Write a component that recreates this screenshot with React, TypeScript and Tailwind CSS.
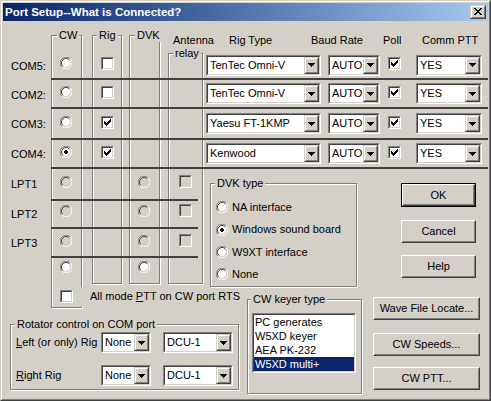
import React from "react";

const Arrow = () => (
  <svg width="7" height="4" viewBox="0 0 7 4" shapeRendering="crispEdges" className="block">
    <rect x="0" y="0" width="7" height="1" fill="#000" />
    <rect x="1" y="1" width="5" height="1" fill="#000" />
    <rect x="2" y="2" width="3" height="1" fill="#000" />
    <rect x="3" y="3" width="1" height="1" fill="#000" />
  </svg>
);

const Check = () => (
  <svg width="7" height="7" viewBox="0 0 7 7" shapeRendering="crispEdges" className="block">
    <rect x="6" y="0" width="1" height="1" fill="#000" />
    <rect x="5" y="1" width="2" height="1" fill="#000" />
    <rect x="0" y="2" width="1" height="1" fill="#000" />
    <rect x="4" y="2" width="3" height="1" fill="#000" />
    <rect x="0" y="3" width="2" height="1" fill="#000" />
    <rect x="3" y="3" width="3" height="1" fill="#000" />
    <rect x="0" y="4" width="5" height="1" fill="#000" />
    <rect x="1" y="5" width="3" height="1" fill="#000" />
    <rect x="2" y="6" width="1" height="1" fill="#000" />
  </svg>
);

function CheckBox({ checked = false, disabled = false }: { checked?: boolean; disabled?: boolean }) {
  return (
    <div className="w-[13px] h-[13px] shrink-0 border border-t-[#808080] border-l-[#808080] border-r-white border-b-white">
      <div
        className={`w-full h-full border border-t-[#404040] border-l-[#404040] border-r-[#D4D0C8] border-b-[#D4D0C8] flex items-center justify-center ${
          disabled ? "bg-[#D4D0C8]" : "bg-white"
        }`}
      >
        {checked && <Check />}
      </div>
    </div>
  );
}

function Radio({ checked = false, disabled = false }: { checked?: boolean; disabled?: boolean }) {
  const fill = disabled ? "#D4D0C8" : "#ffffff";
  return (
    <svg width="12" height="12" viewBox="0 0 12 12" className="block shrink-0">
      <circle cx="6" cy="6" r="4.5" fill={fill} />
      <path d="M10.2 1.8A5.5 5.5 0 0 0 1.8 10.2" fill="none" stroke="#808080" />
      <path d="M1.8 10.2A5.5 5.5 0 0 0 10.2 1.8" fill="none" stroke="#ffffff" />
      <path d="M9.18 2.82A4.5 4.5 0 0 0 2.82 9.18" fill="none" stroke="#404040" />
      <path d="M2.82 9.18A4.5 4.5 0 0 0 9.18 2.82" fill="none" stroke="#D4D0C8" />
      {checked && <path d="M5 4h2v1h1v2h-1v1h-2v-1h-1v-2h1z" fill="#000" shapeRendering="crispEdges" />}
    </svg>
  );
}

function Combo({ text, className = "" }: { text: string; className?: string }) {
  return (
    <div className={`h-[21px] shrink-0 border border-t-[#808080] border-l-[#808080] border-r-white border-b-white ${className}`}>
      <div className="w-full h-full flex border border-t-[#404040] border-l-[#404040] border-r-[#D4D0C8] border-b-[#D4D0C8] bg-white">
        <div className="flex-1 min-w-0 pl-[2px] flex items-center whitespace-nowrap overflow-hidden">{text}</div>
        <div className="w-[15px] h-full shrink-0 border border-t-[#D4D0C8] border-l-[#D4D0C8] border-r-[#404040] border-b-[#404040]">
          <div className="w-full h-full border border-t-white border-l-white border-r-[#808080] border-b-[#808080] bg-[#D4D0C8] flex items-center justify-center">
            <Arrow />
          </div>
        </div>
      </div>
    </div>
  );
}

function Btn({ children, className = "", isDefault = false }: { children: React.ReactNode; className?: string; isDefault?: boolean }) {
  return (
    <div className={`shrink-0 ${isDefault ? "border border-black" : ""} ${className}`}>
      <div className="w-full h-full border border-t-white border-l-white border-r-[#404040] border-b-[#404040]">
        <div className="w-full h-full border border-t-[#D4D0C8] border-l-[#D4D0C8] border-r-[#808080] border-b-[#808080] flex items-center justify-center whitespace-nowrap">
          {children}
        </div>
      </div>
    </div>
  );
}

function Group({
  label,
  className = "",
  labelClass = "left-[4px]",
  children,
}: {
  label: string;
  className?: string;
  labelClass?: string;
  children?: React.ReactNode;
}) {
  return (
    <div className={`shrink-0 border border-[#808080] shadow-[inset_1px_1px_0_#fff,1px_1px_0_#fff] ${className}`}>
      <span className={`absolute -top-[7px] ${labelClass} px-[2px] bg-[#D4D0C8] leading-[13px] whitespace-nowrap`}>{label}</span>
      {children}
    </div>
  );
}

const comRows = [
  { label: "COM5:", rig: "TenTec Omni-V", rigOn: false, cw: false, h: "h-[28px]", lp: "pt-[8px]", cm: "mb-[4px]" },
  { label: "COM2:", rig: "TenTec Omni-V", rigOn: false, cw: false, h: "h-[29px]", lp: "pt-[9px]", cm: "mb-[3px]" },
  { label: "COM3:", rig: "Yaesu FT-1KMP", rigOn: true, cw: false, h: "h-[31px]", lp: "pt-[9px]", cm: "mb-[3px]" },
  { label: "COM4:", rig: "Kenwood", rigOn: true, cw: true, h: "h-[29px]", lp: "pt-[8px]", cm: "mb-[3px]" },
];

const lptRows = [
  { label: "LPT1", h: "h-[32px]", lp: "pt-[9px]", rp: "pt-[7px]" },
  { label: "LPT2", h: "h-[28px]", lp: "pt-[7px]", rp: "pt-[4px]" },
  { label: "LPT3", h: "h-[29px]", lp: "pt-[8px]", rp: "pt-[6px]" },
];

export default function App() {
  return (
    <div className="w-[491px] h-[401px] font-['Liberation_Sans',Arial,sans-serif] text-[11px] leading-[13px] text-black border border-t-[#D4D0C8] border-l-[#D4D0C8] border-r-[#404040] border-b-[#404040]">
      <div className="w-full h-full border border-t-white border-l-white border-r-[#808080] border-b-[#808080] p-px bg-[#D4D0C8] flex flex-col">
        {/* Title bar */}
        <div className="h-[18px] shrink-0 flex items-center bg-linear-to-r from-[#0A246A] to-[#A6CAF0]">
          <span className="pl-[2px] font-bold text-[11.5px] text-white whitespace-nowrap">Port Setup--What is Connected?</span>
          <div className="ml-auto mr-[2px] w-[16px] h-[14px] border border-t-[#D4D0C8] border-l-[#D4D0C8] border-r-[#404040] border-b-[#404040]">
            <div className="w-full h-full border border-t-white border-l-white border-r-[#808080] border-b-[#808080] bg-[#D4D0C8] flex items-center justify-center">
              <svg width="8" height="7" viewBox="0 0 8 7" shapeRendering="crispEdges" className="block -mt-px -ml-px">
                <path d="M0 0h2v1h1v1h2v-1h1v-1h2v1h-1v1h-1v1h-1v1h1v1h1v1h1v1h-2v-1h-1v-1h-2v1h-1v1h-2v-1h1v-1h1v-1h1v-1h-1v-1h-1v-1h-1z" fill="#000" />
              </svg>
            </div>
          </div>
        </div>

        {/* Client */}
        <div className="relative flex-1 flex flex-col">
          {/* Column group boxes */}
          <Group label="CW" labelClass="left-[5px]" className="absolute left-[48px] top-[14px] w-[31px] h-[273px]" />
          <Group label="Rig" labelClass="left-[4px]" className="absolute left-[89px] top-[14px] w-[30px] h-[249px]" />
          <Group label="DVK" labelClass="left-[5px]" className="absolute left-[126px] top-[14px] w-[31px] h-[249px]" />
          <Group label="relay" labelClass="left-[4px]" className="absolute left-[165px] top-[32px] w-[35px] h-[231px]" />

          {/* Header */}
          <div className="relative flex h-[31px] pt-[13px] shrink-0 whitespace-nowrap">
            <div className="w-[170px] shrink-0" />
            <div className="w-[56px] shrink-0">Antenna</div>
            <div className="w-[82px] shrink-0">Rig Type</div>
            <div className="w-[72px] shrink-0">Baud Rate</div>
            <div className="w-[39px] shrink-0">Poll</div>
            <div>Comm PTT</div>
          </div>

          {/* COM rows */}
          {comRows.map((r) => (
            <div key={r.label} className={`relative flex shrink-0 ${r.h}`}>
              <div className={`w-[48px] shrink-0 pl-[8px] ${r.lp}`}>{r.label}</div>
              <div className="flex-1 flex items-center border-b-2 border-[#404040]">
                <div className={`ml-[9px] ${r.cm}`}>
                  <Radio checked={r.cw} />
                </div>
                <div className={`ml-[29px] ${r.cm}`}>
                  <CheckBox checked={r.rigOn} />
                </div>
                <Combo text={r.rig} className="ml-[92px] w-[115px]" />
                <Combo text="AUTO" className="ml-[7px] w-[52px]" />
                <div className={`ml-[8px] ${r.cm}`}>
                  <CheckBox checked />
                </div>
                <Combo text="YES" className="ml-[15px] w-[66px]" />
              </div>
            </div>
          ))}

          {/* Bottom */}
          <div className="flex flex-1">
            {/* Left column */}
            <div className="w-[207px] shrink-0 flex flex-col">
              {lptRows.map((r) => (
                <div key={r.label} className={`relative flex shrink-0 ${r.h}`}>
                  <div className={`w-[48px] shrink-0 pl-[8px] ${r.lp}`}>{r.label}</div>
                  <div className={`w-[147px] shrink-0 flex items-start border-b-2 border-[#404040] ${r.rp}`}>
                    <div className="ml-[9px]">
                      <Radio disabled />
                    </div>
                    <div className="ml-[66px]">
                      <Radio disabled />
                    </div>
                    <div className="ml-[29px] -mt-px">
                      <CheckBox disabled />
                    </div>
                  </div>
                </div>
              ))}
              <div className="relative flex shrink-0 h-[25px]">
                <div className="w-[48px] shrink-0" />
                <div className="flex items-start pt-[3px]">
                  <div className="ml-[9px]">
                    <Radio />
                  </div>
                  <div className="ml-[66px]">
                    <Radio />
                  </div>
                </div>
              </div>

              <div className="relative mt-[4px] ml-[55px] h-[19px] w-[174px] shrink-0 bg-[#D4D0C8] flex items-center pl-[2px]">
                <CheckBox />
                <span className="ml-[17px] whitespace-nowrap">
                  All mode <span className="underline">P</span>TT on CW port RTS
                </span>
              </div>

              <Group label="Rotator control on COM port" className="relative ml-[7px] mt-[18px] w-[229px] h-[66px]">
                <div className="flex items-center mt-[7px]">
                  <div className="w-[90px] shrink-0 pl-[5px] whitespace-nowrap">
                    <span className="underline">L</span>eft (or only) Rig
                  </div>
                  <Combo text="None" className="w-[50px]" />
                  <Combo text="DCU-1" className="ml-[12px] w-[70px]" />
                </div>
                <div className="flex items-center mt-[12px]">
                  <div className="w-[90px] shrink-0 pl-[5px] whitespace-nowrap">
                    <span className="underline">R</span>ight Rig
                  </div>
                  <Combo text="None" className="w-[50px]" />
                  <Combo text="DCU-1" className="ml-[12px] w-[70px]" />
                </div>
              </Group>
            </div>

            {/* Right column */}
            <div className="flex-1 flex flex-col">
              <div className="flex h-[118px] shrink-0">
                <Group label="DVK type" className="relative mt-[14px] w-[147px] h-[104px]">
                  <div className="pt-[12px] pl-[5px] flex flex-col">
                    {[
                      { t: "NA interface", c: false, h: "h-[22px]" },
                      { t: "Windows sound board", c: true, h: "h-[23px]" },
                      { t: "W9XT interface", c: false, h: "h-[22px]" },
                      { t: "None", c: false, h: "h-[22px]" },
                    ].map((o) => (
                      <div key={o.t} className={`flex items-center ${o.h}`}>
                        <Radio checked={o.c} />
                        <span className="ml-[4px] whitespace-nowrap">{o.t}</span>
                      </div>
                    ))}
                  </div>
                </Group>
                <div className="ml-[44px] mt-[14px] flex flex-col">
                  <Btn isDefault className="w-[75px] h-[24px]">
                    OK
                  </Btn>
                  <Btn className="mt-[13px] w-[75px] h-[23px]">Cancel</Btn>
                  <Btn className="mt-[12px] w-[75px] h-[23px]">Help</Btn>
                </div>
              </div>

              <div className="flex">
                <Group label="CW keyer type" labelClass="left-[3px]" className="relative ml-[37px] mt-[12px] w-[115px] h-[95px]">
                  <div className="ml-[4px] mt-[13px] w-[104px] h-[60px] border border-t-[#808080] border-l-[#808080] border-r-white border-b-white">
                    <div className="w-full h-full border border-t-[#404040] border-l-[#404040] border-r-[#D4D0C8] border-b-[#D4D0C8] bg-white flex flex-col">
                      {["PC generates", "W5XD keyer", "AEA PK-232"].map((t) => (
                        <div key={t} className="h-[14px] leading-[14px] pl-[1px] whitespace-nowrap">
                          {t}
                        </div>
                      ))}
                      <div className="h-[14px] leading-[14px] pl-[1px] whitespace-nowrap bg-[#0A246A] text-white">W5XD multi+</div>
                    </div>
                  </div>
                </Group>
                <div className="ml-[11px] mt-[10px] flex flex-col">
                  <Btn className="w-[107px] h-[23px]">Wave File Locate...</Btn>
                  <Btn className="mt-[13px] w-[107px] h-[23px]">CW Speeds...</Btn>
                  <Btn className="mt-[11px] w-[107px] h-[23px]">CW PTT...</Btn>
                </div>
              </div>
            </div>
          </div>
        </div>
      </div>
    </div>
  );
}
